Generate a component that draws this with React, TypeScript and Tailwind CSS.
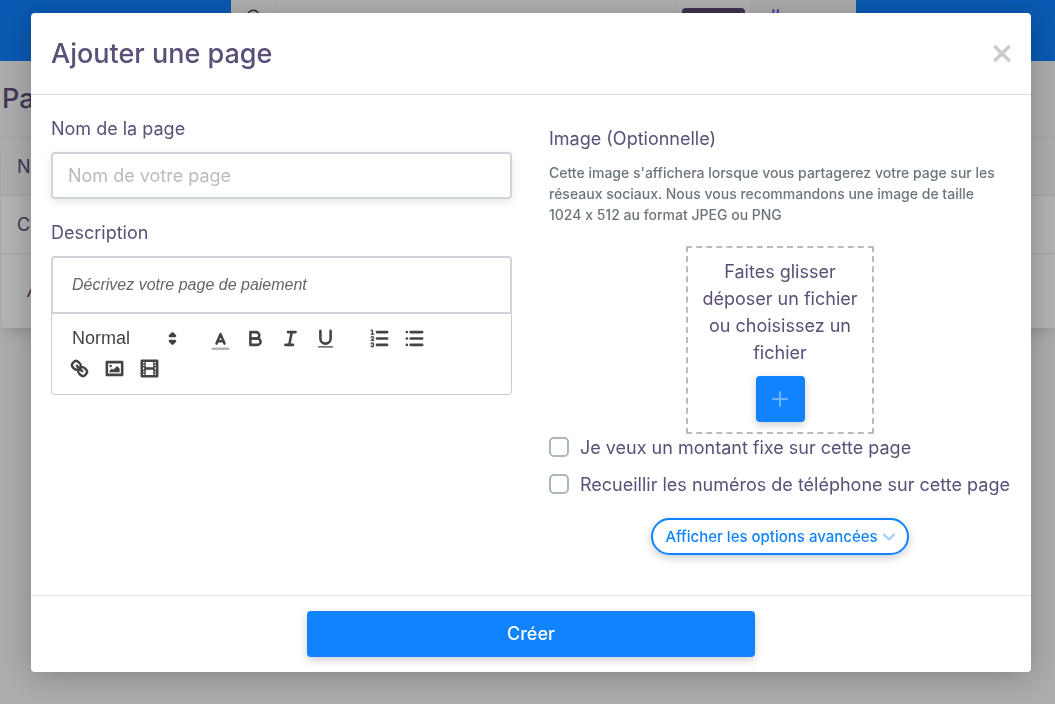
import React, { useState } from "react";
import { Hash, Search } from "lucide-react";

interface ToolButtonProps {
  label: string;
  children: React.ReactNode;
}

const ToolButton: React.FC<ToolButtonProps> = ({ label, children }) => (
  <button
    type="button"
    aria-label={label}
    className="flex h-[30px] w-[35px] items-center justify-center"
  >
    <svg
      viewBox="0 0 18 18"
      className="size-[23px] overflow-visible fill-none stroke-[#444] stroke-2"
      strokeLinecap="round"
      strokeLinejoin="round"
    >
      {children}
    </svg>
  </button>
);

const EditorToolbar = () => (
  <div className="flex flex-wrap gap-x-[19px] rounded-b border border-t-0 border-[#ccc] px-2.5 pt-[9px] pb-[11px]">
    <button
      type="button"
      className="flex h-[30px] w-[122px] items-center justify-between pl-2.5 font-['Liberation_Sans',sans-serif] text-lg text-[#444]"
    >
      Normal
      <svg
        viewBox="0 0 18 18"
        className="size-[23px] fill-none stroke-[#444] stroke-2"
        strokeLinecap="round"
        strokeLinejoin="round"
      >
        <polygon points="7 11 9 13 11 11 7 11" />
        <polygon points="7 7 9 5 11 7 7 7" />
      </svg>
    </button>
    <div className="flex">
      <ToolButton label="Couleur">
        <line x1="3" x2="15" y1="17" y2="17" className="opacity-40" />
        <polyline points="5.9 13 9 5.6 12.1 13" />
        <line x1="11.2" x2="6.8" y1="11.2" y2="11.2" />
      </ToolButton>
      <ToolButton label="Gras">
        <path d="M5,4H9.5A2.5,2.5,0,0,1,12,6.5v0A2.5,2.5,0,0,1,9.5,9H5V4Z" />
        <path d="M5,9h5.5A2.5,2.5,0,0,1,13,11.5v0A2.5,2.5,0,0,1,10.5,14H5V9Z" />
      </ToolButton>
      <ToolButton label="Italique">
        <line x1="7" x2="13" y1="4" y2="4" />
        <line x1="5" x2="11" y1="14" y2="14" />
        <line x1="8" x2="10" y1="14" y2="4" />
      </ToolButton>
      <ToolButton label="Souligné">
        <path d="M5,3V9a4.012,4.012,0,0,0,4,4H9a4.012,4.012,0,0,0,4-4V3" />
        <rect
          x="3"
          y="15"
          width="12"
          height="1"
          rx="0.5"
          className="fill-[#444] stroke-none"
        />
      </ToolButton>
    </div>
    <div className="flex">
      <ToolButton label="Liste numérotée">
        <line x1="7" x2="15" y1="4" y2="4" />
        <line x1="7" x2="15" y1="9" y2="9" />
        <line x1="7" x2="15" y1="14" y2="14" />
        <g className="stroke-1">
          <line x1="2.5" x2="4.5" y1="5.5" y2="5.5" />
          <path d="M2.5,2.9L3.5,2.5V5.5" />
          <path d="M4.5,10.5h-2c0-.234,1.85-1.076,1.85-2.234A0.959,0.959,0,0,0,2.5,8.156" />
          <path d="M2.5,14.846a0.959,0.959,0,0,0,1.85-.109A0.7,0.7,0,0,0,3.75,14a0.688,0.688,0,0,0,.6-0.736,0.959,0.959,0,0,0-1.85-.109" />
        </g>
      </ToolButton>
      <ToolButton label="Liste à puces">
        <line x1="6" x2="15" y1="4" y2="4" />
        <line x1="6" x2="15" y1="9" y2="9" />
        <line x1="6" x2="15" y1="14" y2="14" />
        <line x1="3" x2="3" y1="4" y2="4" />
        <line x1="3" x2="3" y1="9" y2="9" />
        <line x1="3" x2="3" y1="14" y2="14" />
      </ToolButton>
    </div>
    <div className="flex">
      <ToolButton label="Lien">
        <line x1="7" x2="11" y1="7" y2="11" />
        <path d="M8.9,4.577a3.476,3.476,0,0,1,.36,4.679A3.476,3.476,0,0,1,4.577,8.9C3.185,7.5,2.035,6.4,4.217,4.217S7.5,3.185,8.9,4.577Z" />
        <path d="M13.423,9.1a3.476,3.476,0,0,0-4.679-.36,3.476,3.476,0,0,0,.36,4.679c1.392,1.392,2.5,2.542,4.679.36S14.815,10.5,13.423,9.1Z" />
      </ToolButton>
      <ToolButton label="Image">
        <rect x="3" y="4" width="12" height="10" />
        <g className="fill-[#444] stroke-none">
          <circle cx="6" cy="7" r="1" />
          <polyline points="5 12 5 11 7 9 8 10 11 7 13 9 13 12 5 12" />
        </g>
      </ToolButton>
      <ToolButton label="Vidéo">
        <rect x="3" y="3" width="12" height="12" />
        <g className="fill-[#444] stroke-none">
          <rect x="5" y="3" width="1" height="12" />
          <rect x="12" y="3" width="1" height="12" />
          <rect x="5" y="8" width="8" height="2" />
          {[5, 7, 10, 12].map((y) => (
            <React.Fragment key={y}>
              <rect x="3" y={y} width="3" height="1" />
              <rect x="12" y={y} width="3" height="1" />
            </React.Fragment>
          ))}
        </g>
      </ToolButton>
    </div>
  </div>
);

const PageList = () => (
  <div>
    <header className="flex h-[61px] bg-[#0d80ff] pl-[231px]">
      <div className="flex w-[625px] bg-[#fdfdfd]">
        <div className="w-[46px] border-r border-[#f3f3f5] pt-2">
          <Search size={18} className="mx-auto text-[#444]" />
        </div>
        <div className="flex-1 border-r border-[#f3f3f5]" />
        <div className="w-[73px] px-[5px] pt-2">
          <div className="h-9 rounded bg-[#5a4a70]" />
        </div>
        <div className="w-[106px] bg-[#f6f7f9] pt-2 pl-4">
          <Hash size={18} strokeWidth={3} className="text-[#7a5cf0]" />
        </div>
      </div>
    </header>
    <h1 className="pt-5 pl-0.5 text-[27px] leading-9 font-medium">Pages</h1>
    <table className="mt-5 ml-px w-full rounded bg-white text-left text-lg shadow-lg">
      <thead>
        <tr className="h-[58px] border-y border-[#e8e9ec] bg-[#f6f7f9]">
          <th className="pl-4 font-normal">Nom</th>
        </tr>
      </thead>
      <tbody>
        <tr className="h-[58px] border-b border-[#e8e9ec]">
          <td className="pl-4">Co</td>
        </tr>
        <tr className="h-[74px]">
          <td className="pl-[26px] italic">Aucune</td>
        </tr>
      </tbody>
    </table>
  </div>
);

const App: React.FC = () => {
  const [name, setName] = useState("");
  const [description, setDescription] = useState("");

  return (
    <div className="min-h-screen overflow-hidden bg-[#f6f7f9] font-[Inter,sans-serif] text-[#5b4e77]">
      <PageList />

      <div className="fixed inset-0 overflow-y-auto bg-black/30 pt-[13px] pr-6 pb-8 pl-[31px]">
        <form
          role="dialog"
          aria-labelledby="dialog-title"
          onSubmit={(e) => e.preventDefault()}
          className="mx-auto max-w-[1000px] rounded bg-white shadow-[0_4px_30px_rgba(0,0,0,0.25)]"
        >
          <div className="flex items-center justify-between border-b border-[#dcdce6] px-5 py-[22px]">
            <h2
              id="dialog-title"
              className="text-[27px] leading-[37px] font-medium"
            >
              Ajouter une page
            </h2>
            <button type="button" aria-label="Fermer">
              <svg
                viewBox="0 0 18 18"
                className="size-[18px] stroke-[#ccc] stroke-[3.6]"
                strokeLinecap="round"
              >
                <path d="M2.4 1.9l13.2 13.2M15.6 1.9L2.4 15.1" />
              </svg>
            </button>
          </div>

          <div className="grid grid-cols-2 gap-9 px-5 pt-5 pb-10 text-lg leading-[27px]">
            <div className="pr-px">
              <label htmlFor="page-name" className="block">
                Nom de la page
              </label>
              <input
                id="page-name"
                value={name}
                onChange={(e) => setName(e.target.value)}
                placeholder="Nom de votre page"
                className="mt-2.5 h-[47px] w-full rounded border-2 border-[#ced4da] px-[15px] shadow-[0_3px_8px_rgba(0,0,0,0.1)] outline-none placeholder:text-[#bbb]"
              />
              <label htmlFor="page-description" className="mt-5 block">
                Description
              </label>
              <textarea
                id="page-description"
                rows={1}
                value={description}
                onChange={(e) => setDescription(e.target.value)}
                placeholder="Décrivez votre page de paiement"
                className="mt-2.5 block h-[58px] w-full resize-none rounded-t border-2 border-[#ced4da] px-[19px] py-[13px] font-['Liberation_Sans',sans-serif] text-base leading-[27px] outline-none placeholder:text-[#666] placeholder:italic"
              />
              <EditorToolbar />
            </div>

            <div className="pt-2.5">
              <p>Image (Optionnelle)</p>
              <p className="mt-2.5 pr-2 text-sm leading-[21px] font-medium text-[#6c757d] [font-variant-ligatures:no-contextual]">
                Cette image s'affichera lorsque vous partagerez votre page sur
                les réseaux sociaux. Nous vous recommandons une image de taille
                1024 x 512 au format JPEG ou PNG
              </p>
              <div className="mx-auto mt-[21px] w-[188px] border-2 border-dashed border-[#bbb] p-2.5 text-center">
                Faites glisser déposer un fichier ou choisissez un fichier
                <button
                  type="button"
                  aria-label="Choisir un fichier"
                  className="mx-auto mt-2.5 flex h-[46px] w-[49px] items-center justify-center rounded bg-[#1183ff] text-white/40 shadow-[0_3px_8px_rgba(0,0,0,0.2)]"
                >
                  <svg
                    viewBox="0 0 16 16"
                    className="size-4 stroke-current stroke-2"
                    strokeLinecap="round"
                  >
                    <path d="M8 1v14M1 8h14" />
                  </svg>
                </button>
              </div>
              <label className="flex items-start gap-[11px]">
                <input
                  type="checkbox"
                  className="mt-[3px] size-5 shrink-0 appearance-none rounded-[5px] border-2 border-[#adb5bd] checked:bg-[#1183ff]"
                />
                Je veux un montant fixe sur cette page
              </label>
              <label className="mt-2.5 flex items-start gap-[11px]">
                <input
                  type="checkbox"
                  className="mt-[3px] size-5 shrink-0 appearance-none rounded-[5px] border-2 border-[#adb5bd] checked:bg-[#1183ff]"
                />
                Recueillir les numéros de téléphone sur cette page
              </label>
              <button
                type="button"
                className="mx-auto mt-5 flex h-[37px] items-center gap-[5px] rounded-full border-2 border-[#1183ff] px-3 text-[15px] font-medium text-[#1183ff] shadow-[0_3px_8px_rgba(0,0,0,0.2)]"
              >
                Afficher les options avancées
                <svg
                  viewBox="0 0 12 8"
                  className="h-2 w-3 fill-none stroke-current stroke-2 opacity-40"
                  strokeLinecap="round"
                  strokeLinejoin="round"
                >
                  <path d="M1 1.5l5 5 5-5" />
                </svg>
              </button>
            </div>
          </div>

          <div className="flex justify-center border-t border-[#dee2e6] py-[15px]">
            <button
              type="submit"
              className="h-[46px] w-full max-w-[448px] rounded bg-[#1183ff] text-lg font-medium text-white shadow-[0_3px_8px_rgba(0,0,0,0.2)]"
            >
              Créer
            </button>
          </div>
        </form>
      </div>
    </div>
  );
};

export default App;
